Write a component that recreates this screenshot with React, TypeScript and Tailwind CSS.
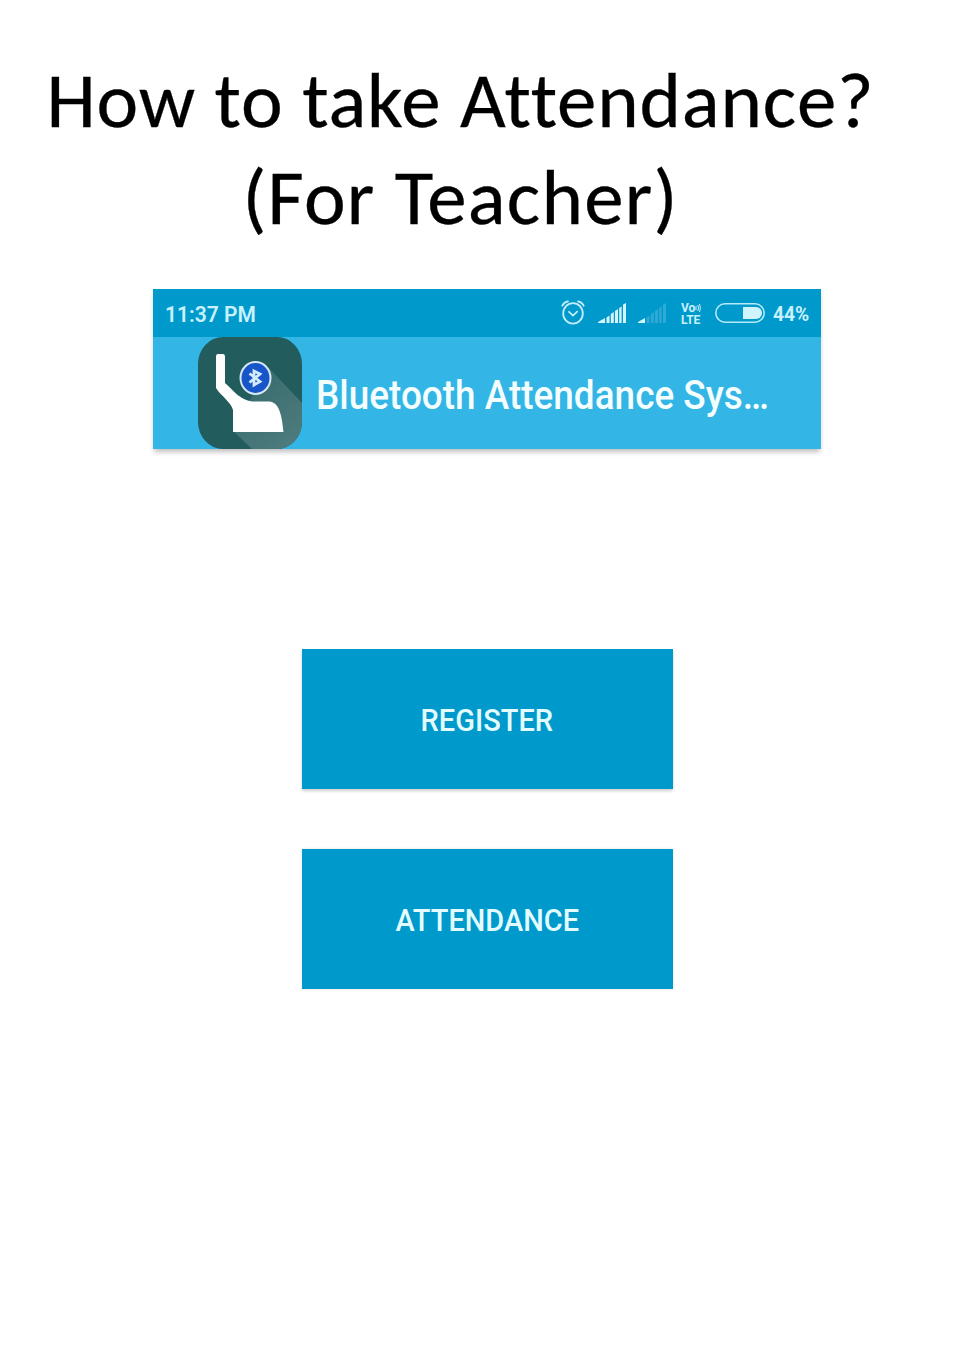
function AlarmIcon() {
  return (
    <svg className="h-7 w-6 shrink-0" viewBox="0 0 24 28" fill="none" stroke="#c4edfb" strokeWidth="1.8" strokeLinecap="round">
      <ellipse cx="12" cy="14.4" rx="9.8" ry="10.3" />
      <path d="M1.3 6.7C2.4 4.4 4.2 2.9 7 2.4M22.7 6.7C21.6 4.4 19.8 2.9 17 2.4" />
      <path d="M8 12.8l4 3.8 4.2-3.9" strokeWidth="1.8" />
    </svg>
  );
}

function SignalIcon({ weak = false }: { weak?: boolean }) {
  const rest = weak ? "#2fa9d5" : "#d3f4fd";
  return (
    <svg className="h-5 w-7 shrink-0" viewBox="0 0 28 20">
      <path d="M0 20v-1l7-4v5z" fill="#d3f4fd" />
      <path d="M8.5 14.5l3-2V20h-3z" fill={rest} />
      <path d="M12.8 11l3-2v11h-3z" fill={rest} />
      <path d="M17 8l3-2v14h-3z" fill={rest} />
      <path d="M21.2 5l2.4-1.6V20h-2.4z" fill={rest} />
      <path d="M25 1.5L28 0v20h-3z" fill={rest} />
    </svg>
  );
}

function BatteryIcon() {
  return (
    <svg className="h-5 w-[50px] shrink-0" viewBox="0 0 50 20">
      <rect x="0.8" y="0.8" width="48.4" height="18.4" rx="9.2" fill="none" stroke="#b5ebf8" strokeWidth="1.6" />
      <path d="M28 4h13a6 6 0 0 1 0 12H28z" fill="#d0f4fd" />
    </svg>
  );
}

function AppLogo() {
  return (
    <svg className="h-28 w-[104px] shrink-0" viewBox="0 0 104 112">
      <defs>
        <clipPath id="tile">
          <rect width="104" height="112" rx="25" ry="27" />
        </clipPath>
        <linearGradient id="fold" x1="0.3" y1="0.1" x2="0.9" y2="0.9">
          <stop offset="0" stopColor="#386b6d" />
          <stop offset="1" stopColor="#4d7b7e" />
        </linearGradient>
      </defs>
      <g clipPath="url(#tile)">
        <rect width="104" height="112" fill="#225c5d" />
        <path d="M70 30L104 66v46H54L35 94z" fill="url(#fold)" />
      </g>
      <path
        d="M20 17h5q2 0 2 3v26C36 54 42 63 54 64.5h17c10 0 13 14 14.5 30.5H35V73C33 65 23 59 18 51V20q0-3 2-3z"
        fill="#fff"
      />
      <ellipse cx="57.5" cy="41" rx="16" ry="17" fill="#d9e8f5" />
      <ellipse cx="57.5" cy="41" rx="14" ry="15" fill="#1755c8" />
      <path d="M51.5 36.5l10.5 8-6 3.5V34l6 3-10.5 8.5" fill="none" stroke="#d3ebff" strokeWidth="2.8" />
    </svg>
  );
}

function Heading() {
  return (
    <h1 className="flex w-[921px] flex-col items-center pt-[52px] font-['Carlito','Lato',sans-serif] text-[79px] leading-[97px] whitespace-nowrap text-black [-webkit-text-stroke:0.3px_black]">
      <span className="tracking-[0.8px]">How to take Attendance?</span>
      <span className="tracking-[1.2px]">(For Teacher)</span>
    </h1>
  );
}

function StatusBar() {
  return (
    <div className="flex h-12 items-center bg-[#0099cc] pr-3 pl-3 text-[#c7f1fc]">
      <div className="w-[396px] shrink-0">
        <span className="inline-block origin-left scale-x-[0.955] pt-0.5 text-[22px] font-semibold whitespace-nowrap">11:37 PM</span>
      </div>
      <AlarmIcon />
      <div className="ml-[13px] flex shrink-0 gap-3">
        <SignalIcon />
        <SignalIcon weak />
      </div>
      <div className="ml-[15px] flex w-[22px] shrink-0 flex-col pt-0.5 text-[12px] leading-[12px] font-bold">
        <div className="flex h-3 items-center">
          Vo
          <svg className="h-2.5 w-1.5 shrink-0" viewBox="0 0 6 10" fill="none" stroke="currentColor">
            <path d="M1 3v4M2.8 2q1.5 3 0 6M4.5 1q1.8 4 0 8" />
          </svg>
        </div>
        <div className="h-3">LTE</div>
      </div>
      <div className="ml-3 shrink-0">
        <BatteryIcon />
      </div>
      <span className="ml-2 origin-left scale-x-[0.96] pt-0.5 text-[20px] font-bold">44%</span>
    </div>
  );
}

function MenuButton({ label, shadow }: { label: string; shadow: string }) {
  return (
    <button className={`flex h-[140px] w-[371px] items-center justify-center bg-[#0099cc] pt-1 pr-px text-[31px] font-medium text-[#e2fcff] ${shadow}`}>
      <span className="scale-x-[0.935]">{label}</span>
    </button>
  );
}

export default function App() {
  return (
    <main className="h-[1372px] w-[958px] overflow-hidden bg-white font-['Roboto',sans-serif]">
      <Heading />
      <section className="mt-[43px] ml-[153px] w-[668px]">
        <header className="shadow-[0_4px_5px_-1px_rgba(0,0,0,0.25)]">
          <StatusBar />
          <div className="flex h-28 items-center bg-[#33b5e5] pl-[45px]">
            <AppLogo />
            <span className="ml-3.5 origin-left scale-x-[0.923] pt-1.5 text-[40px] font-medium whitespace-nowrap text-[#f4feff]">
              Bluetooth Attendance Sys…
            </span>
          </div>
        </header>
        <div className="mt-[200px] ml-[149px] flex flex-col gap-[60px]">
          <MenuButton label="REGISTER" shadow="shadow-[0_2px_3px_rgba(0,0,0,0.2)]" />
          <MenuButton label="ATTENDANCE" shadow="shadow-[0_0_3px_rgba(0,0,0,0.12)]" />
        </div>
      </section>
    </main>
  );
}
